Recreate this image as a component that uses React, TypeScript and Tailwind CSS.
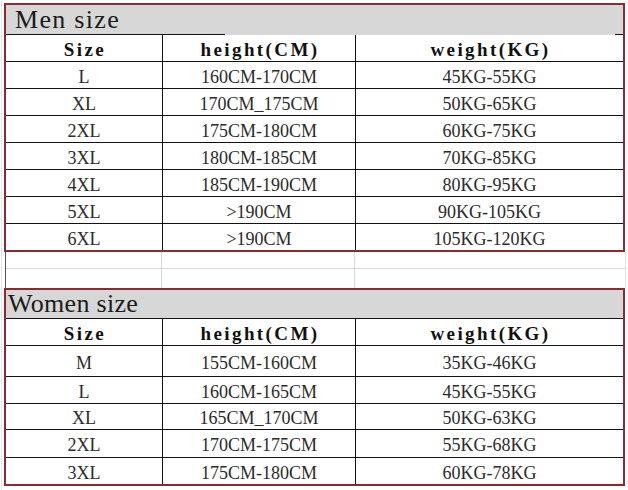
const men = [
  ["L", "160CM-170CM", "45KG-55KG"],
  ["XL", "170CM_175CM", "50KG-65KG"],
  ["2XL", "175CM-180CM", "60KG-75KG"],
  ["3XL", "180CM-185CM", "70KG-85KG"],
  ["4XL", "185CM-190CM", "80KG-95KG"],
  ["5XL", ">190CM", "90KG-105KG"],
  ["6XL", ">190CM", "105KG-120KG"],
];

const women = [
  ["M", "155CM-160CM", "35KG-46KG"],
  ["L", "160CM-165CM", "45KG-55KG"],
  ["XL", "165CM_170CM", "50KG-63KG"],
  ["2XL", "170CM-175CM", "55KG-68KG"],
  ["3XL", "175CM-180CM", "60KG-78KG"],
];

const serif = { fontFamily: '"Liberation Serif", "Times New Roman", serif' };

const colCls = (i: number) =>
  i === 0 ? "w-[157px] border-r border-[#111]" : i === 1 ? "w-[193px] border-r border-[#111]" : "flex-1";

const Head = ({ h }: { h: string }) => (
  <div className={`flex ${h}`} style={serif}>
    {["Size", "height(CM)", "weight(KG)"].map((c, i) => (
      <div
        key={c}
        className={`flex items-center justify-center pt-[4px] pl-[2px] text-[19px] font-bold tracking-[2.4px] text-[#111] ${colCls(i)}`}
      >
        {c}
      </div>
    ))}
  </div>
);

const Row = ({ cells, h }: { cells: string[]; h: string }) => (
  <div className={`flex ${h} border-t border-[#111]`} style={serif}>
    {cells.map((c, i) => (
      <div key={i} className={`flex items-center justify-center pt-[4px] text-[18px] text-[#2b2b2b] ${colCls(i)}`}>
        {c}
      </div>
    ))}
  </div>
);

export default function App() {
  return (
    <div className="w-[628px] h-[490px] bg-white overflow-hidden flex">
      <div className="w-[1px] ml-[1px] bg-[#e4e4e4]" />
      <div className="ml-[2px] pt-[3px] flex flex-col">
        {/* Men */}
        <div className="w-[621px] border-2 border-[#8c2a33]">
          <div
            className="h-[29px] bg-[#d7d7d7] pl-[9px] text-[26px] leading-[30px] tracking-[1.3px] text-[#1a1a1a]"
            style={serif}
          >
            Men size
          </div>
          <div className="flex h-[1px]">
            <div className="w-[219px] bg-[#111]" />
            <div className="flex-1 bg-[#dcdcdc]" />
            <div className="w-[8px] bg-[#111]" />
          </div>
          <Head h="h-[26px]" />
          {men.map((r) => (
            <Row key={r[0]} cells={r} h="h-[27px]" />
          ))}
        </div>

        {/* spreadsheet gap */}
        <div className="w-[621px] h-[36px] flex flex-col border-l border-[#555] ml-[1px]">
          {["h-[17px] border-b", "flex-1"].map((cls, j) => (
            <div key={j} className={`flex ${cls} border-[#d6d6d6]`}>
              <div className="w-[156px] border-r border-[#d6d6d6]" />
              <div className="w-[193px] border-r border-[#d6d6d6]" />
              <div className="flex-1 border-r border-[#e2e2e2]" />
            </div>
          ))}
        </div>

        {/* Women */}
        <div className="w-[621px] border-2 border-[#8c2a33]">
          <div
            className="h-[28px] bg-[#d7d7d7] pl-[2px] text-[26px] leading-[28px] tracking-[0.3px] text-[#1a1a1a]"
            style={serif}
          >
            Women size
          </div>
          <div className="border-t border-[#111]">
            <Head h="h-[26px]" />
          </div>
          {women.map((r, i) => (
            <Row key={r[0]} cells={r} h={["h-[31px]", "h-[27px]", "h-[26px]", "h-[28px]", "h-[27px]"][i]} />
          ))}
        </div>
      </div>
    </div>
  );
}
